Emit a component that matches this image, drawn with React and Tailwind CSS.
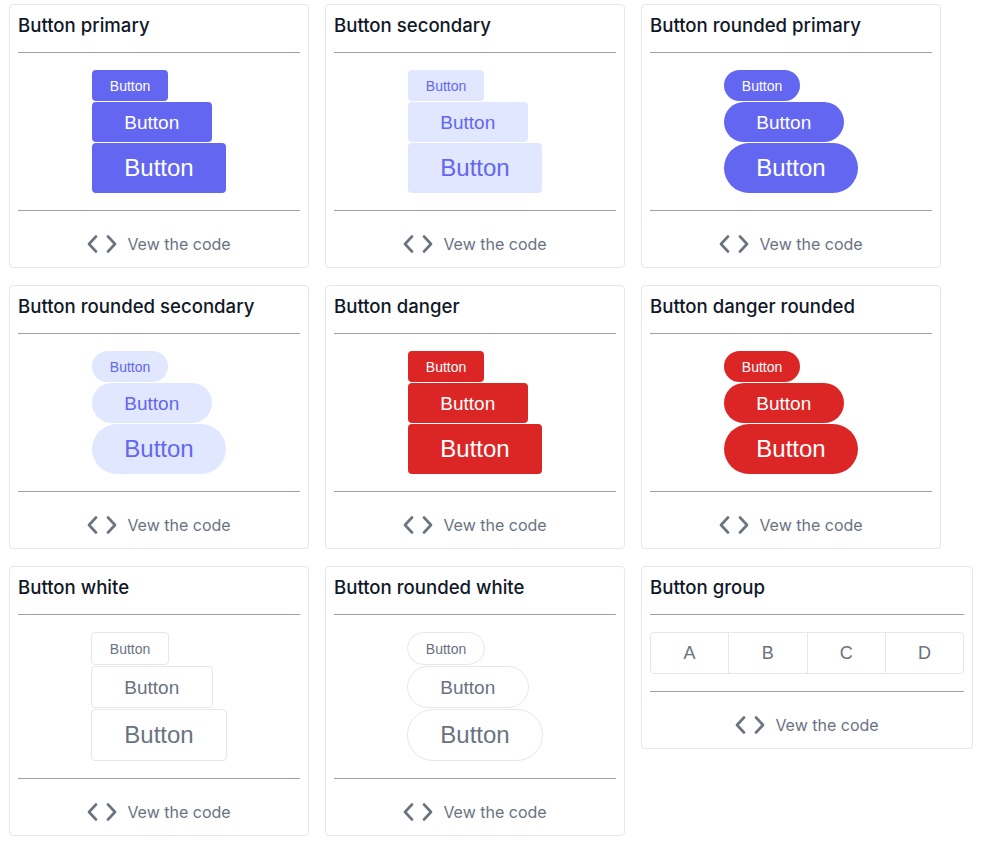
import React from 'react';

const sizes = [
  'h-[31px] px-[18px] text-sm',
  'h-[40px] px-[32.5px] text-[19px]',
  'h-[50px] px-[32.5px] text-2xl',
];

const whiteSizes = [
  'h-[33px] px-[18px] text-sm',
  'h-[42px] px-[32.5px] text-[19px]',
  'h-[52px] px-[32.5px] text-2xl',
];

const variants = [
  { title: 'Button primary', cls: 'bg-[#6366f1] text-white rounded', sizes },
  { title: 'Button secondary', cls: 'bg-[#e0e7ff] text-[#6366f1] rounded', sizes },
  { title: 'Button rounded primary', cls: 'bg-[#6366f1] text-white rounded-full', sizes },
  { title: 'Button rounded secondary', cls: 'bg-[#e0e7ff] text-[#6366f1] rounded-full', sizes },
  { title: 'Button danger', cls: 'bg-[#dc2626] text-white rounded', sizes },
  { title: 'Button danger rounded', cls: 'bg-[#dc2626] text-white rounded-full', sizes },
  { title: 'Button white', cls: 'bg-white border border-gray-200 text-gray-500 rounded', sizes: whiteSizes },
  { title: 'Button rounded white', cls: 'bg-white border border-gray-200 text-gray-500 rounded-full', sizes: whiteSizes },
];

const CodeIcon = () => (
  <svg width="30" height="18" viewBox="0 0 30 18" fill="none" stroke="#6b7280" strokeWidth="2.6" strokeLinecap="round" strokeLinejoin="round">
    <path d="M9 1.5 L2 9 L9 16.5" />
    <path d="M21 1.5 L28 9 L21 16.5" />
  </svg>
);

const Card = ({ title, width = 'w-[300px]', children }) => (
  <div className={`${width} bg-white border border-gray-200 rounded px-2 pt-1.5`}>
    <h3 className="text-[18.6px] leading-7 font-medium text-gray-900">{title}</h3>
    <div className="mt-[13px] h-px bg-gray-400" />
    <div className="pt-[17px] pb-[17px] flex justify-center">{children}</div>
    <div className="h-px bg-gray-400" />
    <div className="flex items-center justify-center gap-2.5 pt-[21px] pb-[11px]">
      <CodeIcon />
      <span className="text-base leading-6 text-gray-500">Vew the code</span>
    </div>
  </div>
);

export default function App() {
  return (
    <div className="min-h-screen bg-white pl-[9px] pt-1 font-['Inter',sans-serif]">
      <div className="flex flex-wrap items-start gap-x-4 gap-y-[17px] w-[970px]">
        {variants.map((v) => (
          <Card key={v.title} title={v.title}>
            <div className="flex flex-col items-start gap-px">
              {v.sizes.map((s, i) => (
                <button
                  key={i}
                  className={`${s} ${v.cls} font-['Liberation_Sans',Arial,sans-serif] leading-none flex items-center`}
                >
                  Button
                </button>
              ))}
            </div>
          </Card>
        ))}
        <Card title="Button group" width="w-[332px]">
          <div className="w-full flex border border-gray-200 rounded h-[42px] font-['Liberation_Sans',Arial,sans-serif] text-lg text-gray-500">
            {['A', 'B', 'C', 'D'].map((l, i) => (
              <div
                key={l}
                className={`flex-1 flex items-center justify-center ${i > 0 ? 'border-l border-gray-200' : ''}`}
              >
                {l}
              </div>
            ))}
          </div>
        </Card>
      </div>
    </div>
  );
}
